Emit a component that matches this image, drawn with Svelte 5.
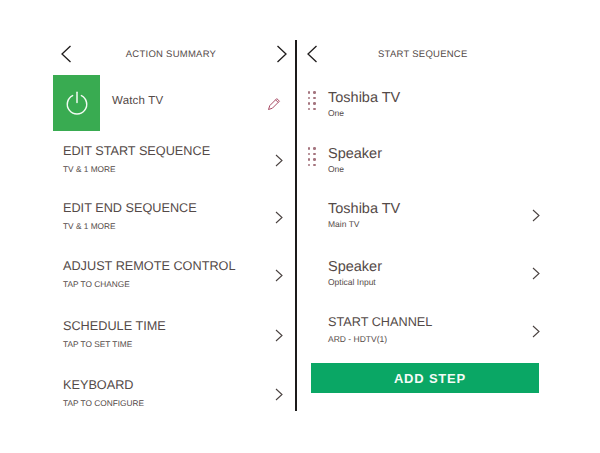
<script>
  const left = [
    { t: 'EDIT START SEQUENCE', s: 'TV & 1 MORE', h: 57 },
    { t: 'EDIT END SEQUENCE', s: 'TV & 1 MORE', h: 58 },
    { t: 'ADJUST REMOTE CONTROL', s: 'TAP TO CHANGE', h: 60 },
    { t: 'SCHEDULE TIME', s: 'TAP TO SET TIME', h: 59 },
    { t: 'KEYBOARD', s: 'TAP TO CONFIGURE', h: 40 }
  ];
  const right = [
    { t: 'Toshiba TV', s: 'One', drag: true, h: 56 },
    { t: 'Speaker', s: 'One', drag: true, h: 55 },
    { t: 'Toshiba TV', s: 'Main TV', h: 58 },
    { t: 'Speaker', s: 'Optical Input', h: 58 },
    { t: 'START CHANNEL', s: 'ARD - HDTV(1)', caps: true, h: 60 }
  ];
</script>

<div class="screen">
  <section class="panel left">
    <header class="head">
      <svg class="nav" viewBox="0 0 12 18" width="12" height="18"><path d="M10.5 1 L2 9 L10.5 17" /></svg>
      <h1>ACTION SUMMARY</h1>
      <svg class="nav" viewBox="0 0 12 18" width="12" height="18"><path d="M1.5 1 L10 9 L1.5 17" /></svg>
    </header>

    <div class="action">
      <div class="tile">
        <svg viewBox="0 0 24 24" width="24" height="24">
          <path d="M7.6 4.6 A9.7 9.7 0 1 0 16.4 4.6" />
          <path d="M12 1.2 V11.5" />
        </svg>
      </div>
      <span class="name">Watch TV</span>
      <svg class="pen" viewBox="0 0 14 14" width="14" height="14">
        <path d="M1.5 12.5 L2.8 8.6 L9.8 1.6 L12.4 4.2 L5.4 11.2 Z" />
        <path d="M8.6 2.8 L11.2 5.4" />
      </svg>
    </div>

    {#each left as row}
      <div class="row" style="height: {row.h}px">
        <div class="text">
          <div class="title">{row.t}</div>
          <div class="sub caps">{row.s}</div>
        </div>
        <svg class="chev" viewBox="0 0 8 13" width="8" height="13"><path d="M1 1 L7 6.5 L1 12" /></svg>
      </div>
    {/each}
  </section>

  <section class="panel right">
    <header class="head">
      <svg class="nav" viewBox="0 0 12 18" width="12" height="18"><path d="M10.5 1 L2 9 L10.5 17" /></svg>
      <h1>START SEQUENCE</h1>
    </header>

    <div class="list">
      {#each right as row}
        <div class="step" style="height: {row.h}px">
          <div class="grip">
            {#if row.drag}
              {#each Array(8) as _}<i></i>{/each}
            {/if}
          </div>
          <div class="text">
            <div class="title big" class:upper={row.caps}>{row.t}</div>
            <div class="sub">{row.s}</div>
          </div>
          {#if !row.drag}
            <svg class="chev" viewBox="0 0 8 13" width="8" height="13"><path d="M1 1 L7 6.5 L1 12" /></svg>
          {/if}
        </div>
      {/each}
    </div>

    <button class="add">ADD STEP</button>
  </section>
</div>

<style>
  :global(body) {
    margin: 0;
    background: #fff;
  }
  .screen {
    width: 600px;
    height: 453px;
    box-sizing: border-box;
    padding: 40px 0 42px;
    display: flex;
    font-family: "Liberation Sans", Arial, sans-serif;
    color: #544a48;
    text-rendering: geometricPrecision;
  }
  .panel {
    display: flex;
    flex-direction: column;
  }
  .left {
    width: 297px;
    box-sizing: border-box;
    padding-left: 53px;
    border-right: 2px solid #1c1a1a;
  }
  .right {
    flex: 1;
    padding-left: 10px;
  }
  .head {
    height: 28px;
    display: flex;
    align-items: center;
  }
  .left .head {
    padding: 0 7px 0 7px;
    justify-content: space-between;
  }
  .left h1 {
    margin-left: -6px;
  }
  .right h1 {
    margin-left: 60px;
  }
  .right .head .nav {
    margin-left: -1px;
  }
  h1 {
    margin: 0;
    font-size: 9.5px;
    font-weight: 400;
    letter-spacing: 0.25px;
  }
  .nav path,
  .chev path {
    fill: none;
    stroke: #1f1c1c;
    stroke-width: 1.3;
  }
  .chev path {
    stroke: #4a4240;
    stroke-width: 1.1;
  }
  .action {
    height: 56px;
    margin-top: 7px;
    display: flex;
    align-items: center;
  }
  .tile {
    width: 47px;
    height: 56px;
    background: #39ab51;
    display: flex;
    align-items: center;
    justify-content: center;
    flex: none;
    padding-bottom: 1px;
    box-sizing: border-box;
  }
  .tile path {
    fill: none;
    stroke: #f2fbf3;
    stroke-width: 1.5;
    stroke-linecap: round;
  }
  .name {
    margin-left: 12px;
    margin-top: -4px;
    font-size: 11.5px;
    letter-spacing: 0.2px;
  }
  .pen {
    margin-left: auto;
    margin-right: 14px;
    margin-top: 2px;
  }
  .pen path {
    fill: none;
    stroke: #a84a64;
    stroke-width: 1;
  }
  .row {
    display: flex;
    align-items: flex-start;
    padding-left: 10px;
    padding-right: 12px;
  }
  .row .text {
    flex: 1;
    padding-top: 13px;
  }
  .row .title {
    font-size: 12.7px;
    line-height: 15px;
  }
  .row .sub {
    margin-top: 5px;
  }
  .row .chev {
    margin-top: 23px;
  }
  .sub {
    font-size: 8.5px;
    line-height: 10px;
  }
  .sub.caps {
    font-size: 8.3px;
  }
  .list {
    margin-top: 8px;
  }
  .step {
    display: flex;
    align-items: flex-start;
    padding-right: 60px;
  }
  .grip {
    width: 21px;
    flex: none;
    margin-top: 15px;
    display: grid;
    grid-template-columns: repeat(2, 2.5px);
    grid-auto-rows: 2.5px;
    column-gap: 3px;
    row-gap: 3px;
    padding-left: 0.5px;
    box-sizing: border-box;
    align-content: start;
  }
  .grip i {
    background: #a4747e;
    border-radius: 50%;
  }
  .step .text {
    flex: 1;
    padding-top: 14px;
  }
  .title.big {
    font-size: 14.5px;
    line-height: 17px;
  }
  .title.big.upper {
    font-size: 12.7px;
    line-height: 15px;
    margin-top: -2px;
  }
  .step .sub {
    margin-top: 1px;
  }
  .step .title.upper + .sub {
    margin-top: 4px;
  }
  .step .chev {
    margin-top: 22px;
  }
  .add {
    margin: 0 0 0 4px;
    width: 228px;
    height: 30px;
    border: 0;
    padding: 0 0 0 10px;
    background: #0aa765;
    color: #f4fbf7;
    font-family: inherit;
    font-size: 13px;
    font-weight: 700;
    letter-spacing: 0.8px;
  }
</style>
